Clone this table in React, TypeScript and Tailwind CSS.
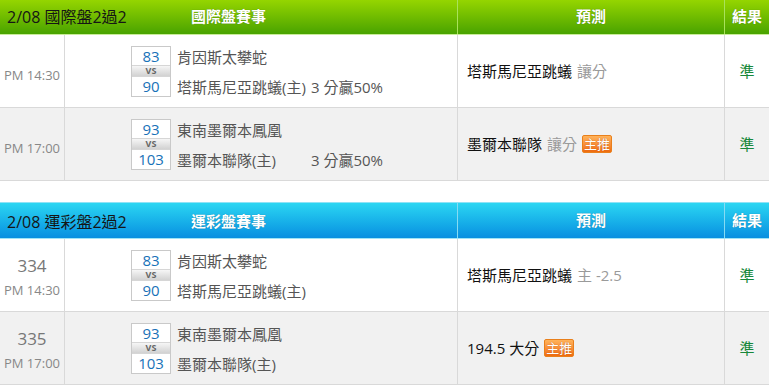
import React from "react";

type Row = {
  num?: string;
  time: string;
  home: number;
  away: number;
  team1: string;
  team2: string;
  hcp?: string;
  pick: string;
  pickNote?: string;
  badge?: boolean;
  gray?: boolean;
};

const FONT = { fontFamily: '"Open Sans","Noto Sans CJK TC",sans-serif' };

function Header({
  title,
  event,
  green,
  first,
}: {
  title: string;
  event: string;
  green: boolean;
  first?: boolean;
}) {
  const bg = green
    ? "bg-linear-to-b from-[#99d800] to-[#48a300] border-b border-[#c9ec9a]"
    : "bg-linear-to-b from-[#2cd6f2] to-[#0a8fe0] border-b border-[#9fe4f6] border-t border-t-[#8fe2f6]";
  const div = green ? "border-l border-[#a9e25c]" : "border-l border-[#86dbf3]";
  return (
    <div
      className={`grid grid-cols-[457px_267px_45px] h-[37px] ${bg} ${first ? "-mt-[2px]" : ""}`}
    >
      <div className="grid items-center">
        <span className="col-start-1 row-start-1 justify-self-start pl-[7px] text-[16px] leading-[20px] pt-[2px] text-[#151515]">
          {title}
        </span>
        <span className="col-start-1 row-start-1 justify-self-center text-[15px] leading-[20px] font-bold text-white [text-shadow:0_0_1px_rgba(0,0,0,0.35)]">
          {event}
        </span>
      </div>
      <div className={`${div} flex items-center justify-center text-[15px] font-bold text-white [text-shadow:0_0_1px_rgba(0,0,0,0.35)]`}>
        預測
      </div>
      <div className={`${div} flex items-center justify-center text-[15px] font-bold text-white [text-shadow:0_0_1px_rgba(0,0,0,0.35)]`}>
        結果
      </div>
    </div>
  );
}

function Badge() {
  return (
    <span className="ml-[5px] inline-flex items-center justify-center w-[30px] h-[18px] rounded-[2px] border border-[#e9801c] bg-linear-to-b from-[#ffb35a] to-[#f06c0c] text-[13px] leading-none text-white [text-shadow:0_0_1px_rgba(120,40,0,0.6)]">
      主推
    </span>
  );
}

function MatchRow({ r, second }: { r: Row; second: boolean }) {
  return (
    <div
      className={`grid grid-cols-[64px_393px_267px_45px] h-[73px] border-b border-[#d9d9d9] ${r.gray ? "bg-[#f1f1f1]" : "bg-white"}`}
    >
      <div className="flex flex-col items-center justify-center">
        {second ? (
          <div className="flex flex-col items-center pt-[5px]">
            <span className="leading-[25px] text-[17px] text-[#777]">{r.num}</span>
            <span className="leading-[25px] text-[13px] text-[#888]">{r.time}</span>
          </div>
        ) : (
          <span className="pt-[10px] text-[13px] text-[#888]">{r.time}</span>
        )}
      </div>
      <div className="border-l border-[#d9d9d9] flex items-center pl-[66px]">
        <div className="flex flex-col w-[40px] border border-[#c9c9c9] bg-white">
          <div className="h-[18px] flex items-center justify-center overflow-hidden text-[15px] text-[#1872b8] leading-[16px]">
            {r.home}
          </div>
          <div className="h-[12px] flex items-center justify-center overflow-hidden bg-linear-to-b from-[#f6f6f6] to-[#d2d2d2] border-y border-[#d6d6d6] text-[9px] font-bold text-[#666] leading-[9px]">
            VS
          </div>
          <div className="h-[19px] flex items-center justify-center overflow-hidden text-[15px] text-[#1872b8] leading-[16px]">
            {r.away}
          </div>
        </div>
        <div className="flex flex-col ml-[6px] w-[206px] text-[15px] text-[#555]">
          <div className="h-[20px] leading-[20px] pt-[1px]">{r.team1}</div>
          <div className="h-[11px]" />
          <div className="h-[20px] leading-[20px] flex justify-between whitespace-nowrap">
            <span>{r.team2}</span>
            {r.hcp && <span>{r.hcp}</span>}
          </div>
        </div>
      </div>
      <div className="border-l border-[#d9d9d9] flex items-center pl-[9px] text-[15px] text-[#111]">
        <span>{r.pick}</span>
        {r.pickNote && <span className="ml-[5px] text-[#9a9a9a]">{r.pickNote}</span>}
        {r.badge && <Badge />}
      </div>
      <div className="border-l border-[#d9d9d9] flex items-center justify-center text-[15px] text-[#17883a]">
        準
      </div>
    </div>
  );
}

const t1: Row[] = [
  {
    time: "PM 14:30",
    home: 83,
    away: 90,
    team1: "肯因斯太攀蛇",
    team2: "塔斯馬尼亞跳蟻(主)",
    hcp: "3 分贏50%",
    pick: "塔斯馬尼亞跳蟻",
    pickNote: "讓分",
  },
  {
    time: "PM 17:00",
    home: 93,
    away: 103,
    team1: "東南墨爾本鳳凰",
    team2: "墨爾本聯隊(主)",
    hcp: "3 分贏50%",
    pick: "墨爾本聯隊",
    pickNote: "讓分",
    badge: true,
    gray: true,
  },
];

const t2: Row[] = [
  {
    num: "334",
    time: "PM 14:30",
    home: 83,
    away: 90,
    team1: "肯因斯太攀蛇",
    team2: "塔斯馬尼亞跳蟻(主)",
    pick: "塔斯馬尼亞跳蟻",
    pickNote: "主 -2.5",
  },
  {
    num: "335",
    time: "PM 17:00",
    home: 93,
    away: 103,
    team1: "東南墨爾本鳳凰",
    team2: "墨爾本聯隊(主)",
    pick: "194.5 大分",
    badge: true,
    gray: true,
  },
];

export default function App() {
  return (
    <div className="w-[769px] h-[387px] overflow-hidden bg-white" style={FONT}>
      <Header title="2/08 國際盤2過2" event="國際盤賽事" green first />
      {t1.map((r, i) => (
        <MatchRow key={i} r={r} second={false} />
      ))}
      <div className="h-[21px]" />
      <Header title="2/08 運彩盤2過2" event="運彩盤賽事" green={false} />
      {t2.map((r, i) => (
        <MatchRow key={i} r={r} second />
      ))}
    </div>
  );
}
